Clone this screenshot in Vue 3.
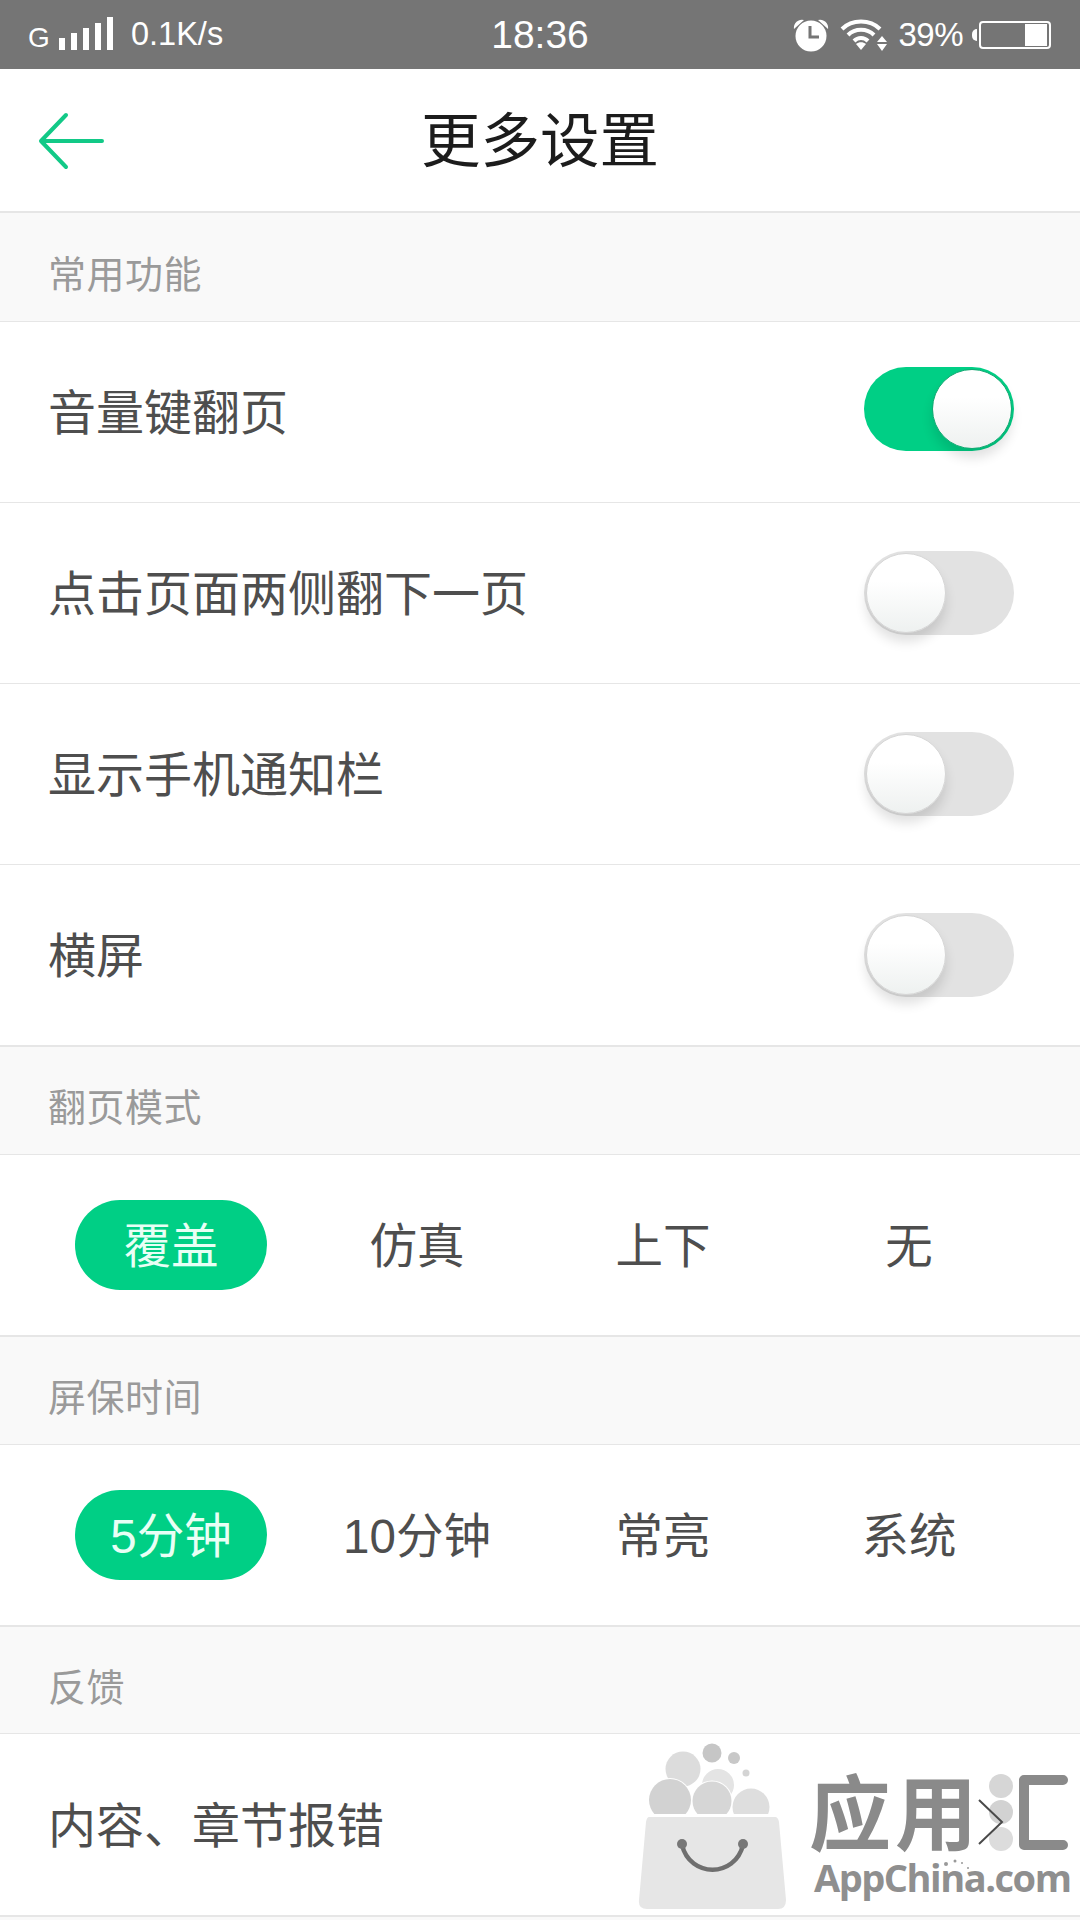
<script setup>
const toggles = [
  { label: '音量键翻页', on: true },
  { label: '点击页面两侧翻下一页', on: false },
  { label: '显示手机通知栏', on: false },
  { label: '横屏', on: false },
]
const pageModes = ['覆盖', '仿真', '上下', '无']
const screenTimes = ['5分钟', '10分钟', '常亮', '系统']
const signal = [12, 17, 22, 27, 33]
</script>

<template>
  <div class="page">
    <header class="status">
      <div class="status-left">
        <span class="net">G</span>
        <span class="bars">
          <i v-for="h in signal" :key="h" :style="{ height: h + 'px' }"></i>
        </span>
        <span class="speed">0.1K/s</span>
      </div>
      <div class="time">18:36</div>
      <div class="status-right">
        <svg class="alarm" width="36" height="34" viewBox="0 0 36 34">
          <path d="M1 11 A8 8 0 0 1 11 2 Z M35 11 A8 8 0 0 0 25 2 Z" fill="#fff" />
          <circle cx="18" cy="18" r="15.500" fill="#fff" />
          <path d="M17 8 V19 H26" fill="none" stroke="#757575" stroke-width="3" />
        </svg>
        <svg class="wifi" width="48" height="34" viewBox="0 0 48 34">
          <g fill="none" stroke="#fff" stroke-width="4">
            <path d="M2 11 C12 1 30 1 40 11" />
            <path d="M8 17 C15 10 27 10 34 17" />
            <path d="M14 23 C18 19 24 19 28 23" />
          </g>
          <path d="M16 26 C19 23.500 23 23.500 26 26 L21 32 Z" fill="#fff" />
          <path d="M42 18 L47 24 H37 Z M37 26 H47 L42 33 Z" fill="#fff" />
        </svg>
        <span class="pct">39%</span>
        <span class="battery"><i></i></span>
      </div>
    </header>

    <nav class="nav">
      <svg class="back" width="66" height="60" viewBox="0 0 66 60">
        <path d="M64 29 H4 M28 3 L3 29 L28 55" fill="none" stroke="#12c987" stroke-width="4" stroke-linecap="round" stroke-linejoin="round" />
      </svg>
      <h1 class="title">更多设置</h1>
    </nav>

    <div class="section first">常用功能</div>
    <div v-for="t in toggles" :key="t.label" class="row">
      <span class="label">{{ t.label }}</span>
      <span class="toggle" :class="{ on: t.on }"><i></i></span>
    </div>

    <div class="section">翻页模式</div>
    <div class="options">
      <span v-for="(m, i) in pageModes" :key="m" class="option" :class="{ active: i === 0 }">{{ m }}</span>
    </div>

    <div class="section">屏保时间</div>
    <div class="options">
      <span v-for="(m, i) in screenTimes" :key="m" class="option" :class="{ active: i === 0 }">{{ m }}</span>
    </div>

    <div class="section short">反馈</div>
    <div class="row feedback">
      <span class="label">内容、章节报错</span>
      <svg class="chevron" width="28" height="48" viewBox="0 0 28 48">
        <path d="M2 2 L25 24 L2 46" fill="none" stroke="#4a4a4a" stroke-width="2" />
      </svg>
    </div>
    <div class="tail"></div>

    <svg class="watermark" width="460" height="200" viewBox="0 0 460 200">
      <defs>
        <clipPath id="bag-top"><rect x="0" y="0" width="200" height="94" /></clipPath>
      </defs>
      <g clip-path="url(#bag-top)">
        <circle cx="63" cy="49" r="17.500" fill="#dcdcdc" />
        <circle cx="92" cy="33" r="9.500" fill="#c6c6c6" />
        <circle cx="114" cy="38" r="6" fill="#c8c8c8" />
        <circle cx="126" cy="53" r="3.500" fill="#d4d4d4" />
        <circle cx="98" cy="65" r="16" fill="#e4e4e4" />
        <circle cx="50" cy="80" r="22" fill="#fff" />
        <circle cx="50" cy="80" r="21" fill="#d2d2d2" />
        <circle cx="92" cy="81" r="20.500" fill="#fff" />
        <circle cx="92" cy="81" r="19.500" fill="#d6d6d6" />
        <circle cx="131" cy="87" r="18.500" fill="#dedede" />
      </g>
      <path d="M29 97 H155 Q158 97 159 102 L166 180 Q166 189 158 189 H27 Q18 189 19 180 L26 102 Q27 97 29 97 Z" fill="#e6e6e6" />
      <path d="M62 125 C70 158 115 158 123 125" fill="none" stroke="#6f6f6f" stroke-width="4.500" stroke-linecap="round" />
      <circle cx="62" cy="124" r="5" fill="#777" />
      <circle cx="123" cy="124" r="5" fill="#777" />
      <text x="189" y="124" class="wm-cn" textLength="168">应用</text>
      <circle cx="381" cy="66" r="12" fill="#d6d6d6" />
      <circle cx="381" cy="92" r="12" fill="#d2d2d2" />
      <circle cx="381" cy="119" r="12" fill="#dcdcdc" />
      <path d="M443 60 H404 V125 H443" fill="none" stroke="#8a8a8a" stroke-width="10" stroke-linecap="round" stroke-linejoin="round" />
      <text x="194" y="172" class="wm-en" textLength="258">AppChina.com</text>
      <g fill="#999">
        <circle cx="326" cy="144" r="2" />
        <circle cx="335" cy="141" r="1.500" />
        <circle cx="342" cy="143" r="1" />
        <circle cx="348" cy="148" r="1" />
      </g>
    </svg>
  </div>
</template>

<style>
html, body { margin: 0; background: #fff; }
</style>

<style scoped>
.page {
  position: relative;
  width: 1080px;
  height: 1920px;
  overflow: hidden;
  background: #fff;
  font-family: "Liberation Sans", "Noto Sans CJK SC", sans-serif;
  color: #4e4e4e;
}
.status {
  height: 69px;
  background: #757575;
  color: #fff;
  display: grid;
  grid-template-columns: 1fr auto 1fr;
  align-items: center;
  font-family: "Liberation Sans", sans-serif;
}
.status-left { display: flex; align-items: center; padding-left: 28px; }
.net { font-size: 28px; width: 31px; margin-top: 6px; }
.bars { display: flex; align-items: flex-end; gap: 6px; height: 33px; margin-bottom: 3px; }
.bars i { width: 6px; background: #fff; display: block; }
.speed { font-size: 32.500px; margin-left: 18px; }
.time { font-size: 39px; }
.status-right { display: flex; align-items: center; justify-content: flex-end; padding-right: 29px; }
.alarm { margin-right: 11px; }
.wifi { margin-right: 10px; }
.pct { font-size: 33px; margin-right: 16px; letter-spacing: -0.5px; }
.battery {
  position: relative;
  display: block;
  width: 72px;
  height: 28px;
  box-sizing: border-box;
  border: 2.500px solid #fff;
  border-radius: 4px;
}
.battery::before {
  content: "";
  position: absolute;
  left: -9px;
  top: 6px;
  width: 5px;
  height: 12px;
  background: #fff;
  border-radius: 5px 0 0 5px;
}
.battery i { position: absolute; right: 2px; top: 1px; bottom: 1px; width: 22px; background: #fff; }
.nav {
  height: 142px;
  display: flex;
  align-items: center;
  justify-content: center;
  position: relative;
}
.back { position: absolute; left: 38px; top: 43px; }
.title { margin: 0 0 9px; font-size: 59.500px; font-weight: 400; color: #1c1c1c; }
.section {
  height: 110px;
  box-sizing: border-box;
  border-top: 2px solid #e6e6e6;
  border-bottom: 1px solid #e6e6e6;
  background: #f9f9f9;
  color: #9a9a9a;
  font-size: 38px;
  padding: 8px 0 0 48px;
  display: flex;
  align-items: center;
  letter-spacing: 0.500px;
}
.section.first { height: 111px; }
.section.short { height: 109px; }
.row {
  height: 181px;
  box-sizing: border-box;
  border-bottom: 1px solid #e6e6e6;
  display: flex;
  align-items: center;
  justify-content: space-between;
  padding: 0 66px 0 48px;
  font-size: 48px;
  position: relative;
}
.row:has(+ .section) { height: 180px; border-bottom: 0; }
.row.feedback { border-bottom: 0; }
.label { margin-bottom: 6px; }
.toggle {
  position: relative;
  display: block;
  width: 150px;
  height: 84px;
  margin-bottom: 1px;
  border-radius: 42px;
  background: #e2e2e2;
}
.toggle.on { background: #00cf85; margin-bottom: 7px; }
.toggle i {
  position: absolute;
  top: 2px;
  left: 2px;
  width: 80px;
  height: 80px;
  box-sizing: border-box;
  border-radius: 50%;
  background: linear-gradient(#fff 35%, #eef1f0);
  border: 1px solid #d6d6d6;
  box-shadow: 0 9px 12px rgba(0, 0, 0, 0.12);
}
.toggle.on i { left: auto; right: 2px; border-color: #14a872; }
.options {
  height: 180px;
  padding: 0 48px;
  display: grid;
  grid-template-columns: repeat(4, 246px);
  align-items: center;
  justify-items: center;
  font-size: 47.500px;
}
.option {
  width: 192px;
  height: 90px;
  box-sizing: border-box;
  padding-bottom: 5px;
  display: flex;
  align-items: center;
  justify-content: center;
  border-radius: 45px;
  white-space: nowrap;
}
.option.active { background: #00cf85; color: #e8fff5; }
.chevron { position: relative; z-index: 2; margin-right: 9px; margin-bottom: 6px; }
.tail { border-top: 2px solid #e6e6e6; height: 3px; background: #f9f9f9; }
.watermark { position: absolute; left: 620px; top: 1720px; z-index: 1; }
.wm-cn {
  font-family: "Noto Sans CJK SC", sans-serif;
  font-size: 82px;
  font-weight: 700;
  fill: #8a8a8a;
}
.wm-en {
  font-family: "Open Sans", "Liberation Sans", sans-serif;
  font-size: 38px;
  font-weight: 700;
  fill: #8f8f8f;
}
</style>
